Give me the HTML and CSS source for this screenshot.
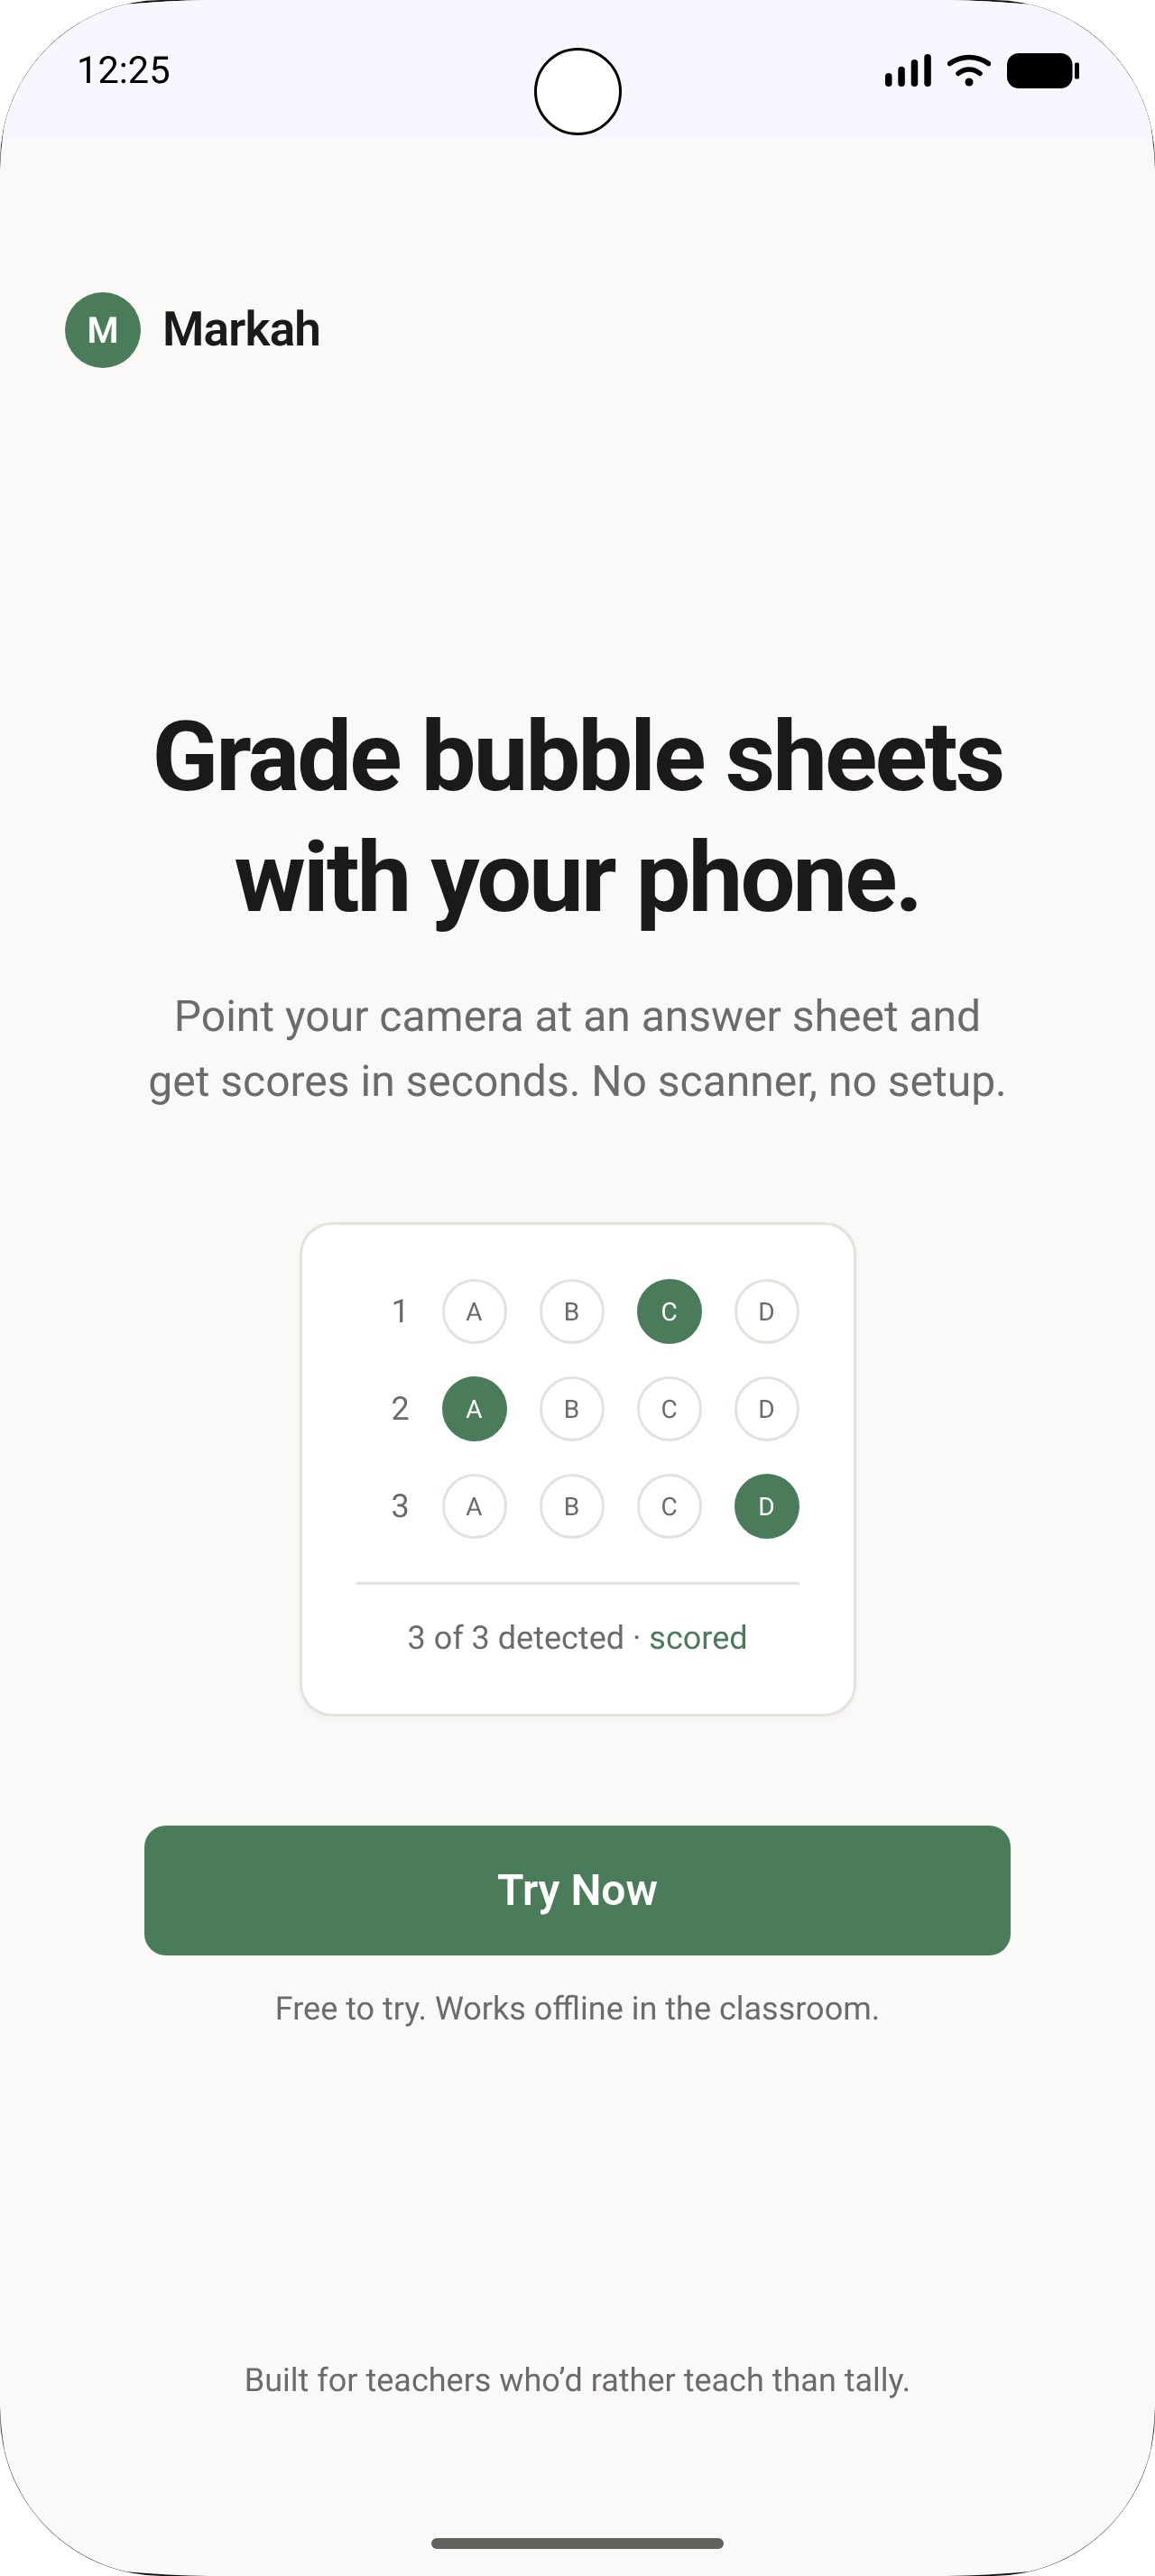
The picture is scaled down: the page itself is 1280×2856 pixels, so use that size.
FILE: index.html
```html
<!DOCTYPE html>
<html>
  <head>
    <title>Markah</title>
    <link rel="stylesheet" href="styles.css">
  </head>
  <body>
    <div class="phone">
      <div class="screen">
        <div class="status_bar">
          <span class="time">12:25</span>
          <div class="camera"></div>
          <div class="status_icons">
            <svg width="52" height="36" viewBox="0 0 52 36">
              <rect x="1" y="21" width="7.5" height="15" rx="3.75" />
              <rect x="15.3" y="13.7" width="7.5" height="22.3" rx="3.75" />
              <rect x="29.7" y="6" width="7.5" height="30" rx="3.75" />
              <rect x="44.3" y="0" width="7.5" height="36" rx="3.75" />
            </svg>
            <svg width="48" height="36" viewBox="0 0 48 36">
              <path d="M2.5 10.5C15 1 33 1 45.500 10.500" fill="none" stroke="#000" stroke-width="5.500" stroke-linecap="round" />
              <path d="M12 21.500C19 15.500 29 15.500 36 21.500" fill="none" stroke="#000" stroke-width="5.500" stroke-linecap="round" />
              <circle cx="24" cy="31" r="4.500" />
            </svg>
            <svg width="80" height="39" viewBox="0 0 80 39">
              <rect x="0" y="0" width="72.500" height="39" rx="13" />
              <rect x="75" y="10.500" width="5" height="18" rx="1.500" />
            </svg>
          </div>
        </div>

        <div class="logo">
          <div class="logo_mark">M</div>
          <span class="logo_name">Markah</span>
        </div>

        <h1 class="headline">Grade bubble sheets<br />with your phone.</h1>
        <p class="subhead">Point your camera at an answer sheet and<br />get scores in seconds. No scanner, no setup.</p>

        <div class="sheet">
          <div class="sheet_row">
            <span class="row_num">1</span>
            <span class="bubble">A</span>
            <span class="bubble">B</span>
            <span class="bubble filled">C</span>
            <span class="bubble">D</span>
          </div>
          <div class="sheet_row">
            <span class="row_num">2</span>
            <span class="bubble filled">A</span>
            <span class="bubble">B</span>
            <span class="bubble">C</span>
            <span class="bubble">D</span>
          </div>
          <div class="sheet_row">
            <span class="row_num">3</span>
            <span class="bubble">A</span>
            <span class="bubble">B</span>
            <span class="bubble">C</span>
            <span class="bubble filled">D</span>
          </div>
          <p class="sheet_status">3 of 3 detected · <span class="scored">scored</span></p>
        </div>

        <button class="try_btn">Try Now</button>
        <p class="note">Free to try. Works offline in the classroom.</p>

        <p class="tagline">Built for teachers who’d rather teach than tally.</p>
        <div class="home_bar"></div>
      </div>
    </div>
  </body>
</html>
```

FILE: styles.css
```css
* {
  margin: 0px;
  padding: 0px;
  box-sizing: border-box;
}
body {
  background: white;
  font-family: Roboto, "Liberation Sans", sans-serif;
  text-rendering: geometricPrecision;
}
.phone {
  width: 1280px;
  height: 2856px;
  background: #111;
  border-radius: 180px;
  will-change: transform;
}
.screen {
  height: 2856px;
  background: #faf9f7;
  display: flex;
  flex-direction: column;
  align-items: center;
  clip-path: path("M232 0 L1048 0 Q1095 .6 1140 4.800 A180 180 0 0 1 1275.200 140 Q1279.400 165 1280 188 L1280 2668 Q1279.400 2691 1275.200 2716 A180 180 0 0 1 1140 2851.200 Q1095 2855.400 1048 2856 L232 2856 Q185 2855.400 140 2851.200 A180 180 0 0 1 4.800 2716 Q.6 2691 0 2668 L0 188 Q.6 165 4.800 140 A180 180 0 0 1 140 4.800 Q185 .6 232 0 Z");
}

.status_bar {
  width: 100%;
  height: 156px;
  flex-shrink: 0;
  background: #f8f6ff;
  padding: 0px 84px 0px 85px;
  display: flex;
  justify-content: space-between;
  align-items: center;
  position: relative;
}
.time {
  font-size: 41.6px;
  color: #000;
}
.camera {
  position: absolute;
  left: 592px;
  top: 53px;
  width: 97px;
  height: 97px;
  background: white;
  border: 3px solid black;
  border-radius: 50%;
}
.status_icons {
  display: flex;
  align-items: center;
  gap: 18px;
}

.logo {
  width: 100%;
  margin-top: 168px;
  padding-left: 72px;
  display: flex;
  align-items: center;
  gap: 24px;
}
.logo_mark {
  width: 84px;
  height: 84px;
  background: #4a7c59;
  border-radius: 50%;
  color: white;
  font-size: 40px;
  font-weight: 600;
  display: flex;
  align-items: center;
  justify-content: center;
}
.logo_name {
  font-size: 53px;
  font-weight: 600;
  color: #1a1a1a;
  letter-spacing: -0.800px;
  margin-top: -2px;
}

.headline {
  margin-top: 365px;
  font-size: 108px;
  line-height: 134px;
  font-weight: 700;
  letter-spacing: -2.800px;
  color: #1a1a1a;
  text-align: center;
}
.subhead {
  margin-top: 50px;
  font-size: 48px;
  line-height: 72px;
  color: #6b6b6b;
  text-align: center;
}

.sheet {
  width: 617px;
  height: 548px;
  margin-top: 120px;
  padding: 60px;
  background: white;
  border: 3px solid #e4e2dd;
  border-radius: 36px;
  box-shadow: 0px 3px 9px rgba(0, 0, 0, 0.04);
  display: flex;
  flex-direction: column;
  gap: 36px;
}
.sheet_row {
  display: flex;
  justify-content: flex-end;
  align-items: center;
  gap: 36px;
}
.row_num {
  width: 20px;
  font-size: 36px;
  color: #6b6b6b;
  text-align: center;
}
.bubble {
  width: 72px;
  height: 72px;
  border: 3px solid #e4e2dd;
  border-radius: 50%;
  font-size: 28px;
  color: #6b6b6b;
  display: flex;
  align-items: center;
  justify-content: center;
}
.filled {
  background: #4a7c59;
  border-color: #4a7c59;
  color: white;
}
.sheet_status {
  margin-top: 12px;
  padding-top: 38px;
  border-top: 3px solid #e4e2dd;
  font-size: 36px;
  color: #6b6b6b;
  text-align: center;
}
.scored {
  color: #4a7c59;
}

.try_btn {
  width: 960px;
  height: 144px;
  margin-top: 121px;
  padding-bottom: 2px;
  flex-shrink: 0;
  background: #4a7c59;
  border: none;
  border-radius: 24px;
  color: white;
  font-family: inherit;
  font-size: 48px;
  font-weight: 600;
}
.note {
  margin-top: 32px;
  font-size: 36px;
  line-height: 54px;
  color: #6b6b6b;
}
.tagline {
  margin-top: auto;
  font-size: 36px;
  line-height: 54px;
  color: #6b6b6b;
}
.home_bar {
  width: 324px;
  height: 12px;
  margin-top: 148px;
  margin-bottom: 30px;
  flex-shrink: 0;
  background: #63615d;
  border-radius: 6px;
}
```
